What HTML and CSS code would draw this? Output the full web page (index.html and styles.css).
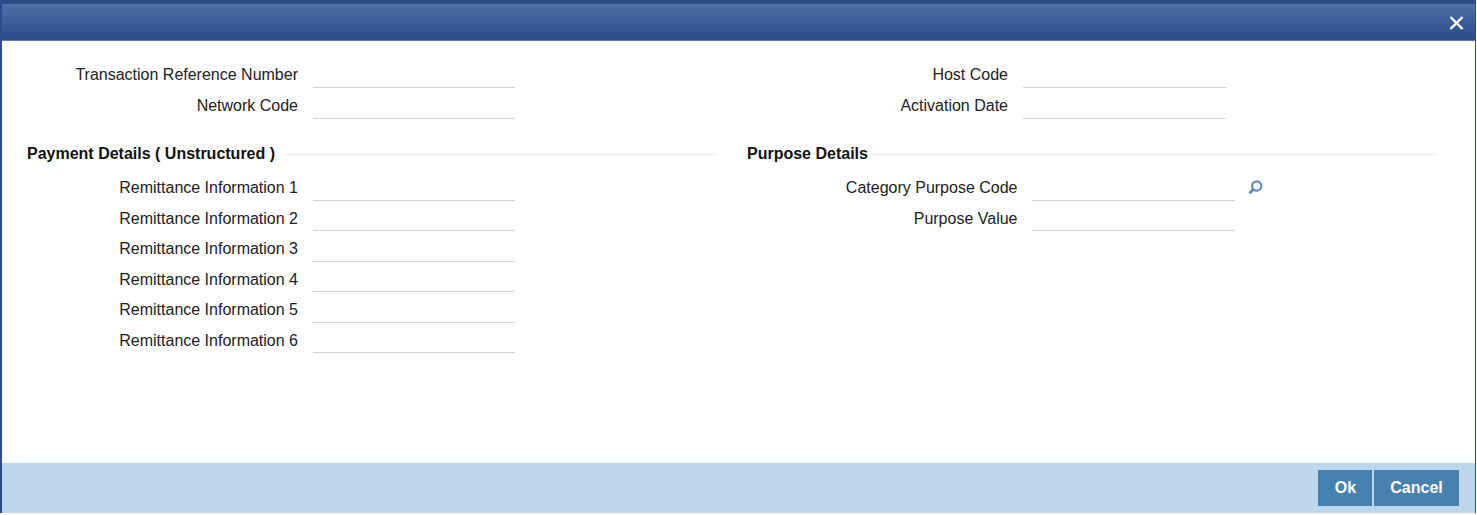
FILE: index.html
```html
<html lang="en">
  <head>
    <meta charset="UTF-8" />
    <title>Transaction Details</title>
    <link rel="stylesheet" href="styles.css">
  </head>
  <body>
    <div class="window">
      <div class="window-header">
        <button class="close-button" aria-label="Close">
          <svg width="15" height="14" viewBox="0 0 15 14"><path d="M1.5 1 13.5 13M13.5 1 1.5 13" stroke="#fff" stroke-width="2.4" fill="none"/></svg>
        </button>
      </div>
      <div class="window-body">
        <div class="top-fields">
          <div class="column">
            <div class="form-input"><label>Transaction Reference Number</label><input type="text" /></div>
            <div class="form-input"><label>Network Code</label><input type="text" /></div>
          </div>
          <div class="column">
            <div class="form-input"><label>Host Code</label><input type="text" /></div>
            <div class="form-input"><label>Activation Date</label><input type="text" /></div>
          </div>
        </div>
        <div class="groups">
          <div class="group">
            <div class="group-title"><span>Payment Details ( Unstructured )</span></div>
            <div class="form-input"><label>Remittance Information 1</label><input type="text" /></div>
            <div class="form-input"><label>Remittance Information 2</label><input type="text" /></div>
            <div class="form-input"><label>Remittance Information 3</label><input type="text" /></div>
            <div class="form-input"><label>Remittance Information 4</label><input type="text" /></div>
            <div class="form-input"><label>Remittance Information 5</label><input type="text" /></div>
            <div class="form-input"><label>Remittance Information 6</label><input type="text" /></div>
          </div>
          <div class="group group-right">
            <div class="group-title"><span>Purpose Details</span></div>
            <div class="form-input">
              <label>Category Purpose Code</label><input type="text" />
              <svg class="lookup" width="16" height="16" viewBox="0 0 16 16"><circle cx="8.7" cy="7" r="4.6" stroke="#5f8cbc" stroke-width="2.2" fill="none"/><path d="M5.3 10.4 1.5 14.2" stroke="#5f8cbc" stroke-width="2.8" fill="none"/></svg>
            </div>
            <div class="form-input"><label>Purpose Value</label><input type="text" /></div>
          </div>
        </div>
      </div>
      <div class="window-footer">
        <button class="btn btn-ok">Ok</button>
        <button class="btn btn-cancel">Cancel</button>
      </div>
    </div>
  </body>
</html>
```

FILE: styles.css
```css
html, body {
  margin: 0;
  background-color: white;
}

body {
  box-sizing: border-box;
  width: 1477px;
  height: 515px;
  padding: 0 1px 2px 0;
}

.window {
  box-sizing: border-box;
  height: 513px;
  display: flex;
  flex-direction: column;
  border-top: 4px solid #2b4c88;
  border-left: 2px solid #2c4d8a;
  border-right: 1px solid #2c4d8a;
  font-family: "Liberation Sans", Arial, sans-serif;
  font-size: 16px;
  color: #222;
}

.window-header {
  height: 37px;
  display: flex;
  justify-content: flex-end;
  align-items: center;
  box-sizing: border-box;
  padding-right: 11px;
  border-top: 1px solid #5a76a3;
  border-bottom: 1px solid #5d7aa5;
  background: linear-gradient(#4b6fa6, #2a4b8a);
}

.close-button {
  padding: 0;
  border: none;
  background: none;
  display: flex;
}

.window-body {
  flex: 1;
  background-color: white;
  padding: 16px 0 0 25px;
}

.top-fields {
  display: flex;
}

.column {
  width: 710px;
}

.groups {
  display: flex;
  gap: 30px;
  margin-top: 20px;
}

.group {
  width: 690px;
}

.group-title {
  display: flex;
  align-items: center;
  gap: 10px;
  height: 32px;
  margin-bottom: -0.25px;
  font-weight: bold;
  color: #111;
}

.group-right .group-title {
  gap: 2px;
}

.group-title::after {
  content: "";
  flex: 1;
  border-top: 1px solid #ececec;
}

.form-input {
  display: flex;
  align-items: flex-start;
  height: 30.5px;
}

.form-input label {
  width: 271px;
  margin: 9.25px 15px 0 0;
  line-height: 18px;
  text-align: right;
}

.group-right label {
  width: 270.5px;
  margin-right: 14.5px;
}

.form-input input {
  box-sizing: border-box;
  width: 202px;
  height: 31px;
  padding: 0;
  border: none;
  border-bottom: 1px solid #d4d4d4;
  outline: none;
  background: none;
}

.column:last-child input,
.group-right input {
  width: 203px;
}

.lookup {
  margin: 9px 0 0 13px;
}

.window-footer {
  height: 50px;
  display: flex;
  justify-content: flex-end;
  gap: 2px;
  box-sizing: border-box;
  padding: 7px 16px 0 0;
  background-color: #bcd7ec;
}

.btn {
  height: 36px;
  padding: 0;
  border: none;
  background-color: #4682b0;
  color: white;
  font-family: inherit;
  font-size: 16px;
  font-weight: bold;
}

.btn-ok {
  width: 54px;
  padding-left: 1px;
}

.btn-cancel {
  width: 85px;
}
```
